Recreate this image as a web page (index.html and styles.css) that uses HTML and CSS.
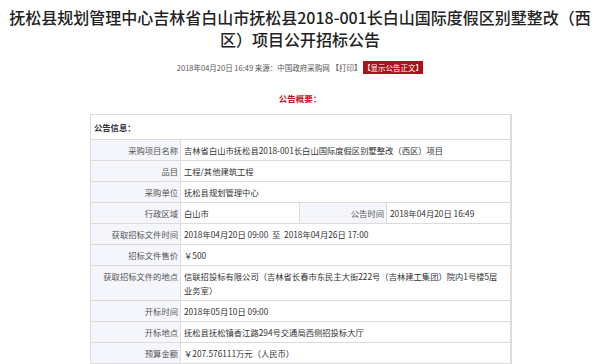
FILE: index.html
```html
<!DOCTYPE html>
<html lang="zh">
<head>
<meta charset="utf-8">
<link rel="stylesheet" href="styles.css">
</head>
<body>
<div class="page">
  <h1 class="title">抚松县规划管理中心吉林省白山市抚松县2018-001长白山国际度假区别墅整改（西<br>区）项目公开招标公告</h1>
  <div class="meta">2018年04月20日 16:49 来源：中国政府采购网 【打印】 <span class="show-btn">【显示公告正文】</span></div>
  <div class="summary">公告概要：</div>
  <table class="info">
    <colgroup>
      <col class="c1"><col class="c2"><col class="c3"><col class="c4">
    </colgroup>
    <tr><td class="head" colspan="4">公告信息：</td></tr>
    <tr><td class="lab">采购项目名称</td><td class="val" colspan="3">吉林省白山市抚松县2018-001长白山国际度假区别墅整改（西区）项目</td></tr>
    <tr><td class="lab">品目</td><td class="val" colspan="3">工程/其他建筑工程</td></tr>
    <tr><td class="lab">采购单位</td><td class="val" colspan="3">抚松县规划管理中心</td></tr>
    <tr><td class="lab">行政区域</td><td class="val">白山市</td><td class="lab">公告时间</td><td class="val">2018年04月20日 16:49</td></tr>
    <tr><td class="lab">获取招标文件时间</td><td class="val" colspan="3">2018年04月20日 09:00 &nbsp;至&nbsp; 2018年04月26日 17:00</td></tr>
    <tr><td class="lab">招标文件售价</td><td class="val" colspan="3">￥500</td></tr>
    <tr><td class="lab">获取招标文件的地点</td><td class="val" colspan="3">信联招投标有限公司（吉林省长春市东民主大街222号（吉林建工集团）院内1号楼5层<br>业务室）</td></tr>
    <tr><td class="lab">开标时间</td><td class="val" colspan="3">2018年05月10日 09:00</td></tr>
    <tr><td class="lab">开标地点</td><td class="val" colspan="3">抚松县抚松镇香江路294号交通局西侧招投标大厅</td></tr>
    <tr><td class="lab">预算金额</td><td class="val" colspan="3">￥207.576111万元（人民币）</td></tr>
  </table>
</div>
</body>
</html>
```

FILE: styles.css
```css
html, body {
  margin: 0;
  padding: 0;
  background: #fff;
}
body {
  font-family: "Noto Sans CJK SC", "Noto Sans", sans-serif;
  color: #333;
}
.page {
  width: 600px;
  padding-top: 6px;
}
.title {
  margin: 0;
  font-size: 16px;
  line-height: 22px;
  font-weight: 500;
  color: #222;
  text-align: center;
}
.meta {
  margin-top: 12px;
  font-size: 7.5px;
  line-height: 12px;
  color: #555;
  text-align: center;
}
.show-btn {
  background: #a8121a;
  color: #fff;
  padding: 1px 0;
}
.summary {
  margin-top: 18px;
  font-size: 8.5px;
  line-height: 12px;
  font-weight: 700;
  color: #c0141c;
  text-align: center;
}
.info {
  margin: 10px 0 0 90px;
  width: 421px;
  border-collapse: collapse;
  table-layout: fixed;
  font-size: 8.3px;
  line-height: 14px;
  border: 1px solid #dcdcdc;
  border-right-width: 2px;
}
.c1 { width: 90px; }
.c2 { width: 119px; }
.c3 { width: 87px; }
.c4 { width: 124px; }
.info td {
  border: 1px solid #dcdcdc;
  padding: 3px 3px;
  vertical-align: top;
  white-space: nowrap;
}
.info td.head {
  padding: 5px 3px;
  font-weight: 700;
  color: #333;
  background: #fff;
}
.info td.lab {
  text-align: right;
  background: #f4f6fb;
  color: #555;
  padding-right: 2px;
}
.info td.val {
  color: #333;
  background: #fff;
}
```
